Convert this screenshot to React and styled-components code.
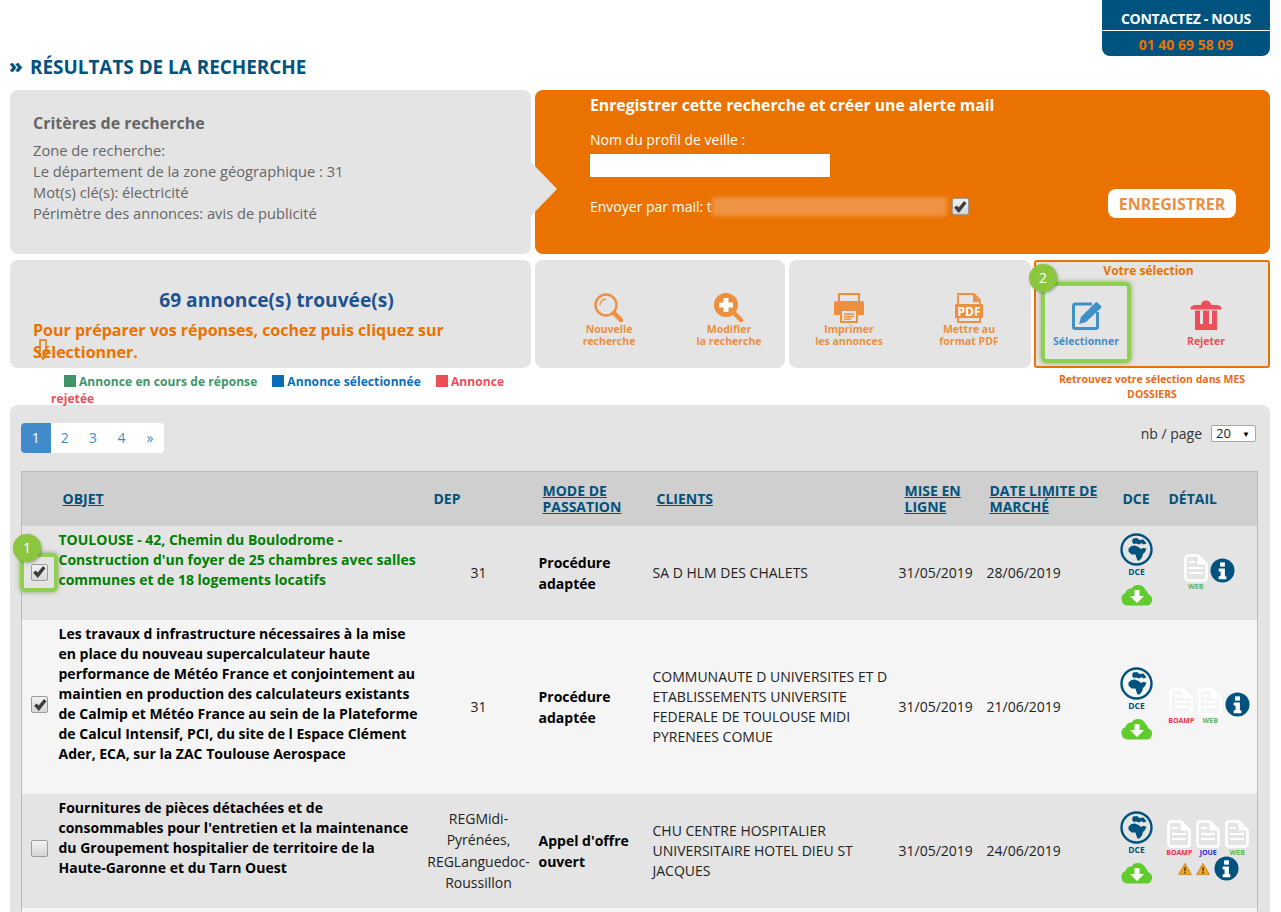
import React from "react";
import styled, { createGlobalStyle } from "styled-components";

const NAVY = "#00527f";
const ORANGE = "#ea7200";
const SOFT = "#ec8f3f";

const Global = createGlobalStyle`
  html, body { margin: 0; padding: 0; background: #fff; overflow: hidden; }
  body { font-family: "Open Sans", "Liberation Sans", sans-serif; font-size: 14px; color: #000; }
  #root { height: 912px; overflow: hidden; }
  * { box-sizing: border-box; }
`;

const Page = styled.div`
  width: 1281px;
  padding: 0 11px 0 10px;
`;
const Top = styled.header`
  display: flex;
  justify-content: flex-end;
  height: 56px;
`;
const Contact = styled.div`
  width: 168px;
  height: 56px;
  background: ${NAVY};
  border-radius: 0 0 8px 8px;
  text-align: center;
  font-weight: 700;
  font-size: 14px;
`;
const ContactLabel = styled.div`
  height: 31px;
  line-height: 37px;
  color: #fff;
  border-bottom: 1px solid #fff;
  letter-spacing: -0.3px;
`;
const ContactPhone = styled.div`
  line-height: 28px;
  color: ${ORANGE};
`;
const Title = styled.h1`
  margin: 0 0 0 -1px;
  height: 34px;
  line-height: 22px;
  font-size: 18.9px;
  font-weight: 700;
  color: ${NAVY};
  display: flex;
`;
const Chev = styled.span`
  flex: none;
  width: 21px;
  font-size: 20px;
  font-weight: 800;
  line-height: 20px;
`;
const Row = styled.section`
  display: flex;
  gap: 4px;
  margin-bottom: ${(p) => p.$gap}px;
`;
const Grey = styled.div`
  background: #e4e4e4;
  border-radius: 8px;
`;
const Criteria = styled(Grey)`
  position: relative;
  width: 521px;
  height: 164px;
  padding: 23px 23px;
  color: #666;
  font-size: 14.7px;
  line-height: 21px;
  &::after {
    content: "";
    position: absolute;
    left: 521px;
    top: 72px;
    border-left: 26px solid #e4e4e4;
    border-top: 27px solid transparent;
    border-bottom: 27px solid transparent;
  }
`;
const CriteriaTitle = styled.div`
  font-size: 16px;
  font-weight: 700;
  margin-bottom: 6px;
`;
const Alert = styled.div`
  width: 735px;
  height: 164px;
  background: ${ORANGE};
  border-radius: 8px;
  padding: 4px 34px 0 55px;
  color: #fff;
`;
const AlertTitle = styled.div`
  font-size: 15.75px;
  font-weight: 700;
  line-height: 22px;
  margin-bottom: 14px;
`;
const AlertLabel = styled.div`
  line-height: 20px;
  margin-bottom: 4px;
`;
const NameInput = styled.div`
  width: 240px;
  height: 23px;
  background: #fff;
  margin-bottom: 12px;
`;
const MailRow = styled.div`
  display: flex;
  align-items: center;
  height: 29px;
`;
const Mail = styled.span`
  display: flex;
  align-items: center;
  padding-top: 6px;
`;
const Blurred = styled.span`
  display: inline-block;
  width: 235px;
  height: 19px;
  margin-right: 5px;
  background: #ef9344;
  filter: blur(2px);
`;
const SaveButton = styled.div`
  margin-left: auto;
  width: 128px;
  height: 29px;
  border-radius: 8px;
  background: #fff;
  color: ${SOFT};
  font-size: 16px;
  font-weight: 700;
  line-height: 31px;
  text-align: center;
`;
const Box = styled.span`
  width: 17px;
  height: 17px;
  flex: none;
  border: 1px solid #9b9b9b;
  border-radius: 2px;
  background: linear-gradient(#f2f2f2, #d6d6d6);
  display: inline-flex;
  align-items: center;
  justify-content: center;
`;
const Check = ({ on = true }) => (
  <Box>
    {on && (
      <svg width="14" height="14" viewBox="0 0 13 13">
        <path d="M1 7.200 L3.500 5 L5.300 7 L10.300 1 L12.500 3 L5.400 12 Z" fill="#3c3c3c" />
      </svg>
    )}
  </Box>
);

const Summary = styled(Grey)`
  position: relative;
  width: 521px;
  height: 108px;
  padding: 27px 23px 0;
`;
const Count = styled.div`
  padding-left: 12px;
  text-align: center;
  font-size: 19.200px;
  font-weight: 700;
  line-height: 26px;
  color: #1f5390;
  margin-bottom: 6px;
`;
const Hint = styled.div`
  font-size: 16px;
  font-weight: 700;
  line-height: 22px;
  color: ${ORANGE};
`;
const HintArrow = styled.svg`
  position: absolute;
  left: 26px;
  top: 79px;
`;
const Tools = styled(Grey)`
  width: ${(p) => p.$w}px;
  height: 108px;
  padding: 33px 0 0 ${(p) => p.$pad}px;
  display: flex;
`;
const Tool = styled.div`
  flex: none;
  width: 120px;
  text-align: center;
  font-size: 10.500px;
  font-weight: 700;
  line-height: 12px;
  color: ${SOFT};
  svg { display: block; margin: 0 auto; }
`;
const Selection = styled.div`
  position: relative;
  width: 236px;
  height: 108px;
  margin-left: -1px;
  background: #e4e4e4;
  border: 2px solid ${ORANGE};
  border-radius: 3px;
`;
const SelectionTitle = styled.div`
  text-align: center;
  font-size: 12px;
  font-weight: 700;
  line-height: 16px;
  color: ${ORANGE};
  margin-top: 1px;
  padding-right: 7px;
`;
const SelectionTools = styled.div`
  display: flex;
  padding: 3px 0 0 5px;
`;
const Highlight = styled.div`
  flex: none;
  width: 90px;
  height: 81px;
  padding-top: 14px;
  border: 4px solid #8fd14f;
  border-radius: 5px;
  box-shadow: 0 0 5px rgba(90, 130, 40, 0.65);
  margin-right: 15px;
  font-size: 10.500px;
  font-weight: 700;
  text-align: center;
  color: #4090c8;
  line-height: 12px;
  svg { display: block; margin: 0 auto 5px; }
`;
const RejectTool = styled(Tool)`
  padding-top: 18px;
  color: #ee4e5a;
  svg { margin-bottom: 5px; }
`;
const Badge = styled.span`
  position: absolute;
  left: ${(p) => p.$l}px;
  top: ${(p) => p.$t}px;
  width: 28px;
  height: 28px;
  border-radius: 50%;
  background: #8cc63f;
  color: #fff;
  font-size: 14px;
  line-height: 28px;
  text-align: center;
  box-shadow: 1px 1px 3px rgba(0, 0, 0, 0.3);
  z-index: 2;
`;
const Under = styled.div`
  display: flex;
  height: 37px;
`;
const Legend = styled.div`
  width: 521px;
  padding: 5px 20px 0 41px;
  text-indent: 13px;
  font-size: 12px;
  font-weight: 700;
  line-height: 17px;
  letter-spacing: 0.08px;
`;
const LegendItem = styled.span`
  color: ${(p) => p.$c};
  margin-right: 15px;
  &::before {
    content: "";
    display: inline-block;
    width: 12px;
    height: 12px;
    margin-right: 3px;
    background: ${(p) => p.$s};
    vertical-align: -1px;
  }
`;
const Note = styled.div`
  width: 210px;
  margin-left: 516px;
  padding-top: 4px;
  text-align: center;
  font-size: 10.500px;
  font-weight: 700;
  line-height: 15px;
  color: #ea6a1a;
`;
const Panel = styled(Grey)`
  height: 560px;
  padding: 18px 13px 0 11px;
  border-radius: 8px 8px 0 0;
`;
const PanelHead = styled.div`
  display: flex;
  justify-content: space-between;
  height: 48px;
`;
const Pager = styled.div`
  display: flex;
  height: 30px;
  background: #fff;
  border-radius: 4px;
  overflow: hidden;
`;
const PageLink = styled.span`
  width: ${(p) => (p.$active ? 29.500 : 28.400)}px;
  text-align: center;
  line-height: 30px;
  font-size: 14px;
  color: ${(p) => (p.$active ? "#fff" : "#428bca")};
  background: ${(p) => (p.$active ? "#428bca" : "transparent")};
`;
const PerPage = styled.div`
  display: flex;
  align-items: center;
  height: 18px;
  margin-top: 1px;
  margin-right: 1px;
  gap: 9px;
  color: #333;
`;
const PerSelect = styled.div`
  width: 45px;
  height: 17px;
  background: #fff;
  border: 1px solid #a6a6a6;
  border-radius: 2px;
  font-size: 13px;
  line-height: 15px;
  padding: 0 5px 0 4px;
  display: flex;
  justify-content: space-between;
  color: #222;
`;
const Arrow = styled.span`
  font-size: 8px;
  color: #000;
`;
const Table = styled.table`
  width: 1236px;
  border-collapse: collapse;
  table-layout: fixed;
  border: 1px solid #bbb;
`;
const Th = styled.th`
  height: 54px;
  background: #cfcfcf;
  color: ${NAVY};
  text-align: left;
  font-size: 14px;
  line-height: 16px;
  font-weight: 700;
  padding: 0 2px 0 ${(p) => p.$pad ?? 10}px;
  text-transform: uppercase;
  a { color: inherit; text-decoration: underline; }
`;
const Tr = styled.tr`
  background: ${(p) => (p.$even ? "#f5f5f5" : "#e4e4e4")};
  height: ${(p) => p.$h}px;
`;
const Td = styled.td`
  padding: 0 6px;
  vertical-align: middle;
  line-height: 20px;
`;
const SelectCell = styled(Td)`
  position: relative;
  padding: 0 0 0 9px;
`;
const CheckGlow = styled.span`
  position: absolute;
  left: -2px;
  top: 27px;
  width: 38px;
  height: 39px;
  border: 4px solid #8fd14f;
  border-radius: 5px;
  box-shadow: 0 0 5px rgba(90, 130, 40, 0.65);
  display: flex;
  align-items: center;
  justify-content: center;
`;
const ObjectCell = styled(Td)`
  vertical-align: top;
  padding: 4px 2px 30px 6px;
  font-weight: 700;
  color: ${(p) => p.$c || "#000"};
`;
const DepCell = styled(Td)`
  text-align: center;
  padding: 0 0 0 1px;
  line-height: 21.500px;
  color: #222;
`;
const ModeCell = styled(Td)`
  font-weight: 700;
  line-height: 21px;
`;
const TextCell = styled(Td)`
  padding-right: 2px;
  color: #222;
`;
const DetailCell = styled(Td)`
  padding: 0;
`;
const DceStack = styled.div`
  display: flex;
  flex-direction: column;
  align-items: center;
  padding-bottom: 6px;
`;
const DceLabel = styled.div`
  font-size: 8.500px;
  font-weight: 700;
  line-height: 11px;
  color: ${NAVY};
  margin-bottom: 5px;
`;
const Detail = styled.div`
  display: flex;
  flex-wrap: wrap;
  align-items: center;
  justify-content: center;
  padding-right: 2px;
`;
const DocWrap = styled.div`
  width: 29px;
  font-size: 7px;
  font-weight: 700;
  line-height: 9px;
  text-align: center;
  color: ${(p) => p.$c};
  svg { display: block; margin: 0 auto; }
`;
const AlertLine = styled.div`
  display: flex;
  align-items: center;
  width: 100%;
  justify-content: center;
  gap: 4px;
  margin-top: -1px;
`;
const InfoSvg = styled.svg`
  flex: none;
  margin-top: ${(p) => p.$top}px;
`;

const Doc = ({ label, c }) => (
  <DocWrap $c={c}>
    <svg width="24" height="28" viewBox="0 0 24 28">
      <path d="M4 1.500h10l8.500 8.500v14a2.500 2.500 0 0 1-2.500 2.500H4A2.500 2.500 0 0 1 1.500 24V4A2.500 2.500 0 0 1 4 1.500Z" fill="none" stroke="#fff" strokeWidth="2.600" />
      <path d="M14 2v8h8" fill="#fff" stroke="#fff" strokeWidth="1" />
      <path d="M5 8h6M5 14h14M5 19h14" stroke="#fff" strokeWidth="2.200" />
    </svg>
    {label}
  </DocWrap>
);
const Info = ({ top = -4 }) => (
  <InfoSvg $top={top} width="25" height="25" viewBox="0 0 26 26">
    <circle cx="13" cy="13" r="12.500" fill={NAVY} />
    <rect x="10.500" y="4.500" width="5" height="4.500" fill="#fff" />
    <path d="M9 11h6.500v8H17v3H9v-3h2v-5H9Z" fill="#fff" />
  </InfoSvg>
);
const Warn = () => (
  <svg width="14" height="14" viewBox="0 0 15 14">
    <path d="M7.500 1 L14.500 13 H0.500 Z" fill="#f0a51e" stroke="#b97a14" strokeWidth=".7" />
    <rect x="6.700" y="5" width="1.600" height="4.500" fill="#5a3a08" />
    <rect x="6.700" y="10.300" width="1.600" height="1.600" fill="#5a3a08" />
  </svg>
);
const Cloud = () => (
  <svg width="32" height="24" viewBox="0 0 32 24">
    <path d="M7 23.500A6.500 6.500 0 0 1 4.500 11 6 6 0 0 1 10.500 6.500 8 8 0 0 1 24.500 8 5 5 0 0 1 27 12.200 5.800 5.800 0 0 1 26 23.500Z" fill="#5fcb2d" />
    <path d="M13.500 8h5v6h4.500L16 21 9 14h4.500Z" fill="#fff" />
  </svg>
);
const Globe = () => (
  <svg width="33" height="33" viewBox="0 0 33 33">
    <circle cx="16.500" cy="16.500" r="15" fill="none" stroke={NAVY} strokeWidth="2.400" />
    <path d="M13 5.500 L17 5 L19.500 7 L23.500 6.500 L26.500 10.500 L23.500 11.500 L21.500 10 L19.500 11.500 L16 10.500 L13.500 11 L12 8.500 Z" fill={NAVY} />
    <path d="M11.500 13 L15 12.500 L18.500 14 L21 16 L23 15 L26.500 15.500 L25 19 L23 21 L22 24.500 L19.500 27.500 L17.500 27.500 L16 23.500 L15.500 21.500 L11.500 21.500 L8.500 18.500 L8.500 15.500 Z" fill={NAVY} />
  </svg>
);
const Dce = () => (
  <DceStack>
    <Globe />
    <DceLabel>DCE</DceLabel>
    <Cloud />
  </DceStack>
);

const SearchIcon = () => (
  <svg width="30" height="30" viewBox="0 0 30 30">
    <circle cx="12" cy="12" r="10.500" fill="none" stroke={SOFT} strokeWidth="2.400" />
    <path d="M6 12a6 6 0 0 1 6-6" fill="none" stroke={SOFT} strokeWidth="1.300" />
    <path d="M20 20 L27 27" stroke={SOFT} strokeWidth="4.500" strokeLinecap="round" />
  </svg>
);
const PlusIcon = () => (
  <svg width="30" height="30" viewBox="0 0 30 30">
    <circle cx="12" cy="12" r="12" fill={SOFT} />
    <path d="M9.500 5h5v4.500H19v5h-4.500V19h-5v-4.500H5v-5h4.500Z" fill="#fff" />
    <path d="M20 20 L27 27" stroke={SOFT} strokeWidth="4.500" strokeLinecap="round" />
  </svg>
);
const PrintIcon = () => (
  <svg width="32" height="30" viewBox="0 0 32 30">
    <path d="M6 9V1h20v8" fill="none" stroke={SOFT} strokeWidth="2" />
    <path d="M3 8h26a2 2 0 0 1 2 2v12h-6v-5H7v5H1V10a2 2 0 0 1 2-2Z" fill={SOFT} />
    <rect x="8" y="17" width="16" height="12" fill="none" stroke={SOFT} strokeWidth="2" />
    <path d="M11 21h10M11 23.500h10M11 26h7" stroke={SOFT} strokeWidth="1.300" />
  </svg>
);
const PdfIcon = () => (
  <svg width="30" height="30" viewBox="0 0 30 30">
    <path d="M4 29V1h16l6 6v22Z" fill="none" stroke={SOFT} strokeWidth="1.800" />
    <path d="M19 1v8h7Z" fill={SOFT} />
    <rect x="1" y="11" width="28" height="14" rx="1" fill={SOFT} />
    <text x="15" y="22.500" textAnchor="middle" fontSize="12" fontWeight="700" fill="#fff" fontFamily="Open Sans">PDF</text>
  </svg>
);
const EditIcon = () => (
  <svg width="31" height="30" viewBox="0 0 31 30">
    <path d="M21 4H4a1.500 1.500 0 0 0-1.500 1.500V27A1.500 1.500 0 0 0 4 28.500h21a1.500 1.500 0 0 0 1.500-1.500V12" fill="none" stroke="#4090c8" strokeWidth="3" />
    <path d="M8 24l2-7L24.500 2.500a1.500 1.500 0 0 1 2 0L30 6a1.500 1.500 0 0 1 0 2L15 22Z" fill="#4090c8" />
  </svg>
);
const TrashIcon = () => (
  <svg width="32" height="30" viewBox="0 0 32 30">
    <path d="M0.500 8a5 3 0 0 1 5-3H11a5 4.500 0 0 1 10 0h5.500a5 3 0 0 1 5 3v1.500H0.500Z" fill="#ee4e5a" />
    <path d="M5 10.500h22V30H5Z" fill="#ee4e5a" />
    <path d="M11.500 10.500V24M20.500 10.500V24" stroke="#e4e4e4" strokeWidth="3" />
  </svg>
);

const widths = [31, 371, 109, 114, 246, 88, 131, 50, 96];

export default function App() {
  return (
    <Page>
      <Global />
      <Top>
        <Contact>
          <ContactLabel>CONTACTEZ - NOUS</ContactLabel>
          <ContactPhone>01 40 69 58 09</ContactPhone>
        </Contact>
      </Top>
      <Title>
        <Chev>»</Chev>
        RÉSULTATS DE LA RECHERCHE
      </Title>
      <Row $gap={6}>
        <Criteria>
          <CriteriaTitle>Critères de recherche</CriteriaTitle>
          Zone de recherche:
          <br />
          Le département de la zone géographique : 31
          <br />
          Mot(s) clé(s): électricité
          <br />
          Périmètre des annonces: avis de publicité
        </Criteria>
        <Alert>
          <AlertTitle>Enregistrer cette recherche et créer une alerte mail</AlertTitle>
          <AlertLabel>Nom du profil de veille :</AlertLabel>
          <NameInput />
          <MailRow>
            <Mail>
              Envoyer par mail: t<Blurred />
              <Check />
            </Mail>
            <SaveButton>ENREGISTRER</SaveButton>
          </MailRow>
        </Alert>
      </Row>
      <Row $gap={0}>
        <Summary>
          <Count>69 annonce(s) trouvée(s)</Count>
          <Hint>Pour préparer vos réponses, cochez puis cliquez sur Sélectionner.</Hint>
          <HintArrow width="14" height="22" viewBox="0 0 14 22">
            <path d="M4 1h6v11h3l-6 8-6-8h3Z" fill="none" stroke={ORANGE} strokeWidth="1.400" />
          </HintArrow>
        </Summary>
        <Tools $w={250} $pad={14}>
          <Tool>
            <SearchIcon />
            Nouvelle
            <br />
            recherche
          </Tool>
          <Tool>
            <PlusIcon />
            Modifier
            <br />
            la recherche
          </Tool>
        </Tools>
        <Tools $w={242} $pad={0}>
          <Tool>
            <PrintIcon />
            Imprimer
            <br />
            les annonces
          </Tool>
          <Tool>
            <PdfIcon />
            Mettre au
            <br />
            format PDF
          </Tool>
        </Tools>
        <Selection>
          <SelectionTitle>Votre sélection</SelectionTitle>
          <SelectionTools>
            <Highlight>
              <EditIcon />
              Sélectionner
            </Highlight>
            <RejectTool>
              <TrashIcon />
              Rejeter
            </RejectTool>
          </SelectionTools>
          <Badge $l={-7} $t={2}>2</Badge>
        </Selection>
      </Row>
      <Under>
        <Legend>
          <LegendItem $c="#3f9468" $s="#3f9468">Annonce en cours de réponse</LegendItem>
          <LegendItem $c="#0a6db8" $s="#0a6db8">Annonce sélectionnée</LegendItem>
          <LegendItem $c="#ee4e5a" $s="#ee4e5a">Annonce rejetée</LegendItem>
        </Legend>
        <Note>Retrouvez votre sélection dans MES DOSSIERS</Note>
      </Under>
      <Panel>
        <PanelHead>
          <Pager>
            <PageLink $active>1</PageLink>
            <PageLink>2</PageLink>
            <PageLink>3</PageLink>
            <PageLink>4</PageLink>
            <PageLink>»</PageLink>
          </Pager>
          <PerPage>
            nb / page
            <PerSelect>
              20 <Arrow>▼</Arrow>
            </PerSelect>
          </PerPage>
        </PanelHead>
        <Table>
          <colgroup>
            {widths.map((w, i) => (
              <col key={i} width={w} />
            ))}
          </colgroup>
          <thead>
            <tr>
              <Th />
              <Th><a>Objet</a></Th>
              <Th>Dep</Th>
              <Th><a>Mode de passation</a></Th>
              <Th><a>Clients</a></Th>
              <Th $pad={12}><a>Mise en ligne</a></Th>
              <Th $pad={9}><a>Date limite de marché</a></Th>
              <Th $pad={11}>DCE</Th>
              <Th $pad={7}>Détail</Th>
            </tr>
          </thead>
          <tbody>
            <Tr $h={94}>
              <SelectCell>
                <CheckGlow><Check /></CheckGlow>
                <Badge $l={-9} $t={8}>1</Badge>
              </SelectCell>
              <ObjectCell $c="#008000">
                TOULOUSE - 42, Chemin du Boulodrome - Construction d'un foyer de 25 chambres avec salles communes et de 18 logements locatifs
              </ObjectCell>
              <DepCell>31</DepCell>
              <ModeCell>Procédure adaptée</ModeCell>
              <TextCell>SA D HLM DES CHALETS</TextCell>
              <TextCell>31/05/2019</TextCell>
              <TextCell>28/06/2019</TextCell>
              <Td><Dce /></Td>
              <DetailCell>
                <Detail>
                  <Doc label="WEB" c="#5cb85c" />
                  <Info />
                </Detail>
              </DetailCell>
            </Tr>
            <Tr $h={174} $even>
              <SelectCell><Check /></SelectCell>
              <ObjectCell>
                Les travaux d infrastructure nécessaires à la mise en place du nouveau supercalculateur haute performance de Météo France et conjointement au maintien en production des calculateurs existants de Calmip et Météo France au sein de la Plateforme de Calcul Intensif, PCI, du site de l Espace Clément Ader, ECA, sur la ZAC Toulouse Aerospace
              </ObjectCell>
              <DepCell>31</DepCell>
              <ModeCell>Procédure adaptée</ModeCell>
              <TextCell>COMMUNAUTE D UNIVERSITES ET D ETABLISSEMENTS UNIVERSITE FEDERALE DE TOULOUSE MIDI PYRENEES COMUE</TextCell>
              <TextCell>31/05/2019</TextCell>
              <TextCell>21/06/2019</TextCell>
              <Td><Dce /></Td>
              <DetailCell>
                <Detail>
                  <Doc label="BOAMP" c="#ee3344" />
                  <Doc label="WEB" c="#5cb85c" />
                  <Info />
                </Detail>
              </DetailCell>
            </Tr>
            <Tr $h={114}>
              <SelectCell><Check on={false} /></SelectCell>
              <ObjectCell>
                Fournitures de pièces détachées et de consommables pour l'entretien et la maintenance du Groupement hospitalier de territoire de la Haute-Garonne et du Tarn Ouest
              </ObjectCell>
              <DepCell>REGMidi-Pyrénées, REGLanguedoc-Roussillon</DepCell>
              <ModeCell>Appel d'offre ouvert</ModeCell>
              <TextCell>CHU CENTRE HOSPITALIER UNIVERSITAIRE HOTEL DIEU ST JACQUES</TextCell>
              <TextCell>31/05/2019</TextCell>
              <TextCell>24/06/2019</TextCell>
              <Td><Dce /></Td>
              <DetailCell>
                <Detail>
                  <Doc label="BOAMP" c="#ee3344" />
                  <Doc label="JOUE" c="#2a2ae0" />
                  <Doc label="WEB" c="#5cb85c" />
                  <AlertLine>
                    <Warn />
                    <Warn />
                    <Info top={0} />
                  </AlertLine>
                </Detail>
              </DetailCell>
            </Tr>
            <Tr $h={60} $even>
              <Td colSpan={9} />
            </Tr>
          </tbody>
        </Table>
      </Panel>
    </Page>
  );
}
